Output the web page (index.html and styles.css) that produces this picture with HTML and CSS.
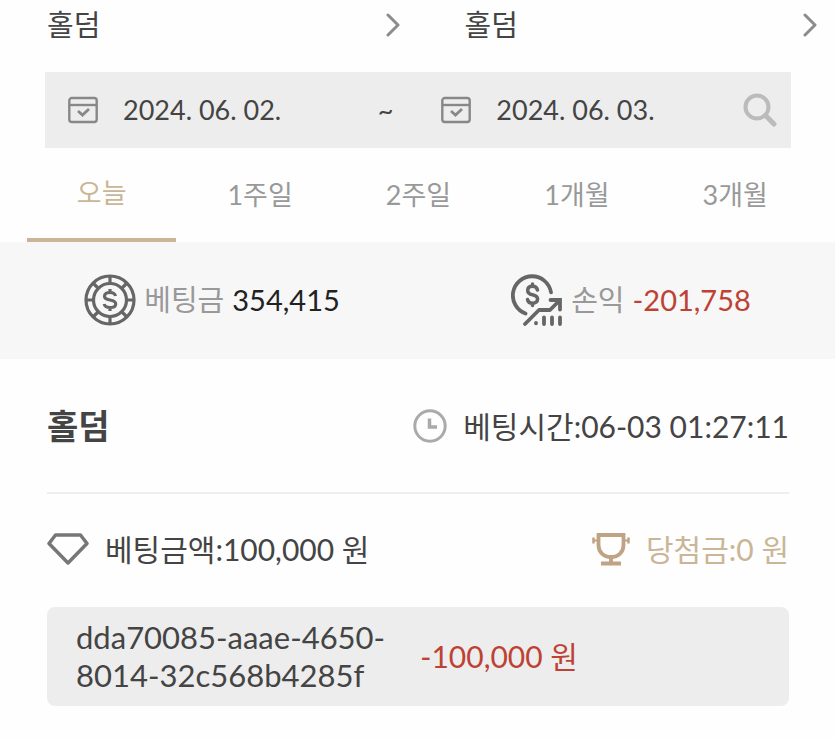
FILE: index.html
```
<!DOCTYPE html>
<html lang="ko">
<head>
<meta charset="utf-8">
<meta name="viewport" content="width=device-width, initial-scale=1">
<title>베팅 내역</title>
<link rel="stylesheet" href="styles.css">
</head>
<body>
<svg class="symbols" aria-hidden="true">
  <symbol id="chevron" viewBox="0 0 14 24"><path d="M2 2l10 10L2 22" fill="none" stroke="currentColor" stroke-width="3" stroke-linecap="round" stroke-linejoin="round"/></symbol>
  <symbol id="calendar" viewBox="0 0 30 28"><g fill="none" stroke="currentColor" stroke-width="2.4"><rect x="1.3" y="2" width="27.4" height="24" rx="2.5"/><path d="M1.3 9h27.4"/><path d="M10 15l4.500 4 6.500-6" stroke-width="2.800"/></g></symbol>
</svg>
<main>
  <nav class="games" aria-label="게임 선택">
    <button type="button" class="game">홀덤<svg class="chevron" aria-hidden="true"><use href="#chevron"/></svg></button>
    <button type="button" class="game">홀덤<svg class="chevron" aria-hidden="true"><use href="#chevron"/></svg></button>
  </nav>

  <form class="dates">
    <label class="date"><svg class="calendar" role="img" aria-label="시작일"><use href="#calendar"/></svg><input type="text" value="2024. 06. 02."></label>
    <span class="tilde">~</span>
    <label class="date"><svg class="calendar" role="img" aria-label="종료일"><use href="#calendar"/></svg><input type="text" value="2024. 06. 03."></label>
    <button type="button" class="search" aria-label="검색"><svg viewBox="0 0 34 34" aria-hidden="true"><circle cx="14" cy="14" r="11.5" fill="none" stroke="currentColor" stroke-width="4"/><path d="M22.500 22.500l8.500 8.500" stroke="currentColor" stroke-width="5" stroke-linecap="round"/></svg></button>
  </form>

  <div class="tabs" role="tablist">
    <button type="button" role="tab" aria-selected="true" class="tab active">오늘</button>
    <button type="button" role="tab" aria-selected="false" class="tab">1주일</button>
    <button type="button" role="tab" aria-selected="false" class="tab">2주일</button>
    <button type="button" role="tab" aria-selected="false" class="tab">1개월</button>
    <button type="button" role="tab" aria-selected="false" class="tab">3개월</button>
  </div>

  <section class="summary">
    <p class="total">
      <svg class="total-icon" viewBox="0 0 52 52" fill="none" stroke="currentColor" stroke-width="3.200" aria-hidden="true">
        <circle cx="26" cy="26" r="24"/><circle cx="26" cy="26" r="16.500"/>
        <path d="M26 2v8M26 42v8M2 26h8M42 26h8M9 9l5.500 5.500M37.500 37.500L43 43M9 43l5.500-5.500M37.500 14.500L43 9"/>
        <path d="M31.500 22c-.5-2.300-2.500-3.500-5.500-3.500s-5.500 1.300-5.500 3.700 2.200 3.200 5.500 3.800 5.700 1.300 5.700 3.900-2.400 3.600-5.700 3.600-5.400-1.200-5.800-3.500M26 15v3.500M26 33.500V37"/>
      </svg>
      <span class="total-name">베팅금</span><span>354,415</span>
    </p>
    <p class="total">
      <svg class="total-icon" viewBox="0 0 52 52" fill="none" stroke="currentColor" stroke-width="3.800" stroke-linecap="round" aria-hidden="true">
        <path d="M14.500 39.500A19.200 19.200 0 1 1 40 18.300"/>
        <path d="M26.500 16c-.6-2.400-2.300-3.700-5-3.700-2.800 0-4.800 1.500-4.800 4.100s2 3.700 4.800 4.300 5.100 1.700 5.100 4.400-2.200 4.200-5 4.200c-2.900 0-4.700-1.500-5.100-3.900M21.500 10v2M21.500 29.500v2" stroke-width="3.500"/>
        <path d="M14 50l14-14h11l9-9" stroke-linejoin="round"/><path d="M39.500 26H49v9.500" stroke-linejoin="miter"/>
        <path d="M25 49v.3M33 43.500V50M41 43.500V50M49 43.500V50"/>
      </svg>
      <span class="total-name">손익</span><span class="loss">-201,758</span>
    </p>
  </section>

  <article class="record">
    <header class="record-head">
      <h2>홀덤</h2>
      <p class="item"><svg class="clock" viewBox="0 0 34 34" fill="none" stroke="currentColor" aria-hidden="true"><circle cx="17" cy="17" r="15.200" stroke-width="3"/><path d="M16.500 9.500v8.500h7.500" stroke-width="3.500"/></svg>베팅시간:06-03 01:27:11</p>
    </header>
    <div class="amounts">
      <p class="item"><svg class="gem" viewBox="0 0 42 34" fill="none" stroke="currentColor" stroke-width="3.500" stroke-linejoin="round" aria-hidden="true"><path d="M8.500 3h25l6.500 8.500L21 31 2 11.500z"/></svg>베팅금액:100,000 원</p>
      <p class="item prize"><svg class="trophy" viewBox="0 0 38 34" fill="none" stroke="currentColor" stroke-width="3.800" aria-hidden="true"><path d="M6.500 3h25v10c0 7-5 12-12.500 12S6.500 20 6.500 13z"/><path d="M19 25v5M9 31.500h20"/><path d="M1.500 5.500v6M36.500 5.500v6" stroke-width="2.500"/><path d="M1.500 8.500H6M32 8.500h4" stroke-width="2"/></svg>당첨금:0 원</p>
    </div>
    <div class="bet">
      <span class="bet-id">dda70085-aaae-4650-8014-32c568b4285f</span>
      <span class="loss">-100,000 원</span>
    </div>
  </article>
</main>
</body>
</html>
```
FILE: styles.css
```
* {
  box-sizing: border-box;
}

body {
  margin: 0;
  background: #fefefe;
  color: #444;
  font: 30px/38px Lato, "Noto Sans CJK KR", sans-serif;
}

button,
input {
  padding: 0;
  border: 0;
  background: none;
  color: inherit;
  font: inherit;
}

p,
h2 {
  margin: 0;
}

svg {
  flex: none;
}

.symbols {
  position: absolute;
  width: 0;
  height: 0;
}

.games {
  display: grid;
  grid-template-columns: 1fr 1fr;
  height: 72px;
}

.game {
  display: flex;
  align-items: center;
  justify-content: space-between;
  height: 50px;
  padding: 0 18px 0 47px;
  font-size: 29px;
}

.chevron {
  width: 14px;
  height: 24px;
  color: #8c8c8c;
}

.dates {
  display: flex;
  align-items: center;
  height: 76px;
  margin: 0 44px 0 45px;
  padding: 0 14px 0 23px;
  background: #ededed;
  font-size: 27px;
}

.date {
  display: flex;
  flex: 1;
  align-items: center;
  gap: 25px;
  min-width: 0;
}

.date input {
  width: 100%;
  min-width: 0;
}

.calendar {
  width: 30px;
  height: 28px;
  color: #888;
}

.tilde {
  margin: 0 48px 0 8px;
}

.search {
  width: 34px;
  height: 34px;
  color: #bbb;
}

.search svg {
  display: block;
}

.tabs {
  display: grid;
  grid-template-columns: repeat(5, 1fr);
  gap: 9px;
  height: 94px;
  margin: 0 25px 0 27px;
}

.tab {
  padding-top: 4px;
  border-bottom: 4px solid transparent;
  color: #999;
  font-size: 27px;
}

.active {
  padding-top: 0;
  border-color: #c9b696;
  color: #c9b696;
}

.summary {
  display: grid;
  grid-template-columns: 1fr 1fr;
  gap: 11px;
  padding: 32px 0 33px 8px;
  background: #f7f7f7;
  color: #222;
  font-size: 29px;
}

.total {
  display: flex;
  align-items: center;
  justify-content: center;
  gap: 8px;
}

.total-icon {
  width: 52px;
  height: 52px;
  color: #666;
}

.total-name {
  color: #999;
}

.loss {
  color: #be4233;
}

.record {
  padding: 0 46px 34px 47px;
}

.record-head,
.amounts {
  display: flex;
  align-items: center;
  justify-content: space-between;
}

.record-head {
  height: 135px;
  border-bottom: 2px solid #eee;
}

.record-head h2 {
  font-size: 34px;
}

.item {
  display: flex;
  align-items: center;
  gap: 16px;
}

.clock {
  width: 34px;
  height: 34px;
  color: #aaa;
}

.amounts {
  height: 110px;
  margin-bottom: 3px;
}

.gem {
  width: 42px;
  height: 34px;
  color: #777;
}

.prize {
  color: #c9b696;
}

.trophy {
  width: 38px;
  height: 34px;
  color: #bfa384;
}

.bet {
  display: flex;
  align-items: center;
  gap: 16px;
  padding: 11px 29px 12px;
  border-radius: 8px;
  background: #ededed;
}

.bet-id {
  flex: 0 0 48%;
  font-size: 31px;
}
```
